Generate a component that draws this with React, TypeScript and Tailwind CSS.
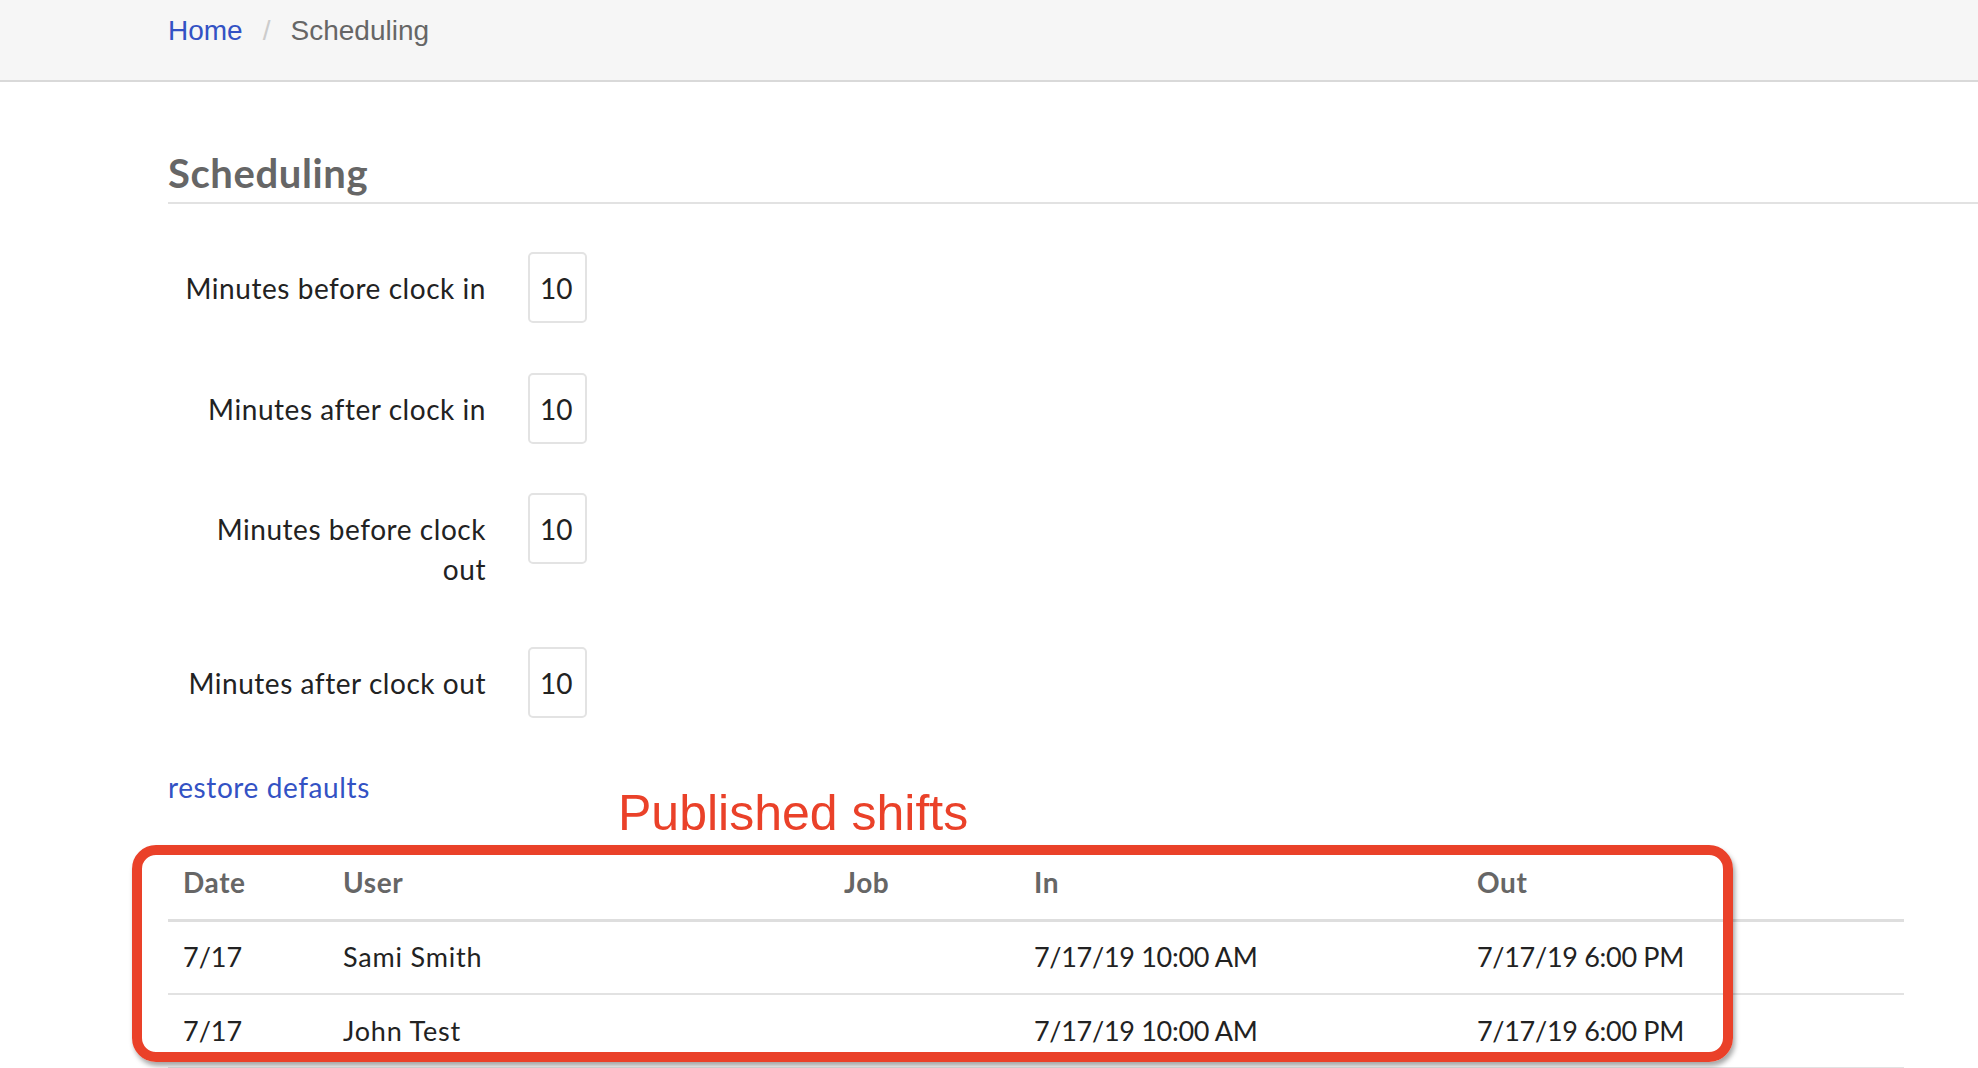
const settings = [
  { id: "before-in", label: "Minutes before clock in", value: "10", gap: "mt-[48px]" },
  { id: "after-in", label: "Minutes after clock in", value: "10", gap: "mt-[50px]" },
  { id: "before-out", label: "Minutes before clock out", value: "10", gap: "mt-[49px]", wrap: true },
  { id: "after-out", label: "Minutes after clock out", value: "10", gap: "mt-[58px]" },
];

const shifts = [
  { date: "7/17", user: "Sami Smith", job: "", in: "7/17/19 10:00 AM", out: "7/17/19 6:00 PM" },
  { date: "7/17", user: "John Test", job: "", in: "7/17/19 10:00 AM", out: "7/17/19 6:00 PM" },
];

function SettingRow({ label, value, gap, wrap }: { label: string; value: string; gap: string; wrap?: boolean }) {
  return (
    <div className={`flex items-start ${gap}`}>
      <label className="w-[318px] pt-[16px] text-right text-[28px] leading-[40px] text-[#222] tracking-[0.55px]">
        {wrap ? (
          <>
            Minutes before clock
            <br />
            out
          </>
        ) : (
          label
        )}
      </label>
      <input
        type="text"
        defaultValue={value}
        className="ml-[42px] h-[71px] w-[59px] rounded-[5px] border-2 border-[#e3e3e3] bg-white px-[10px] text-[28px] text-[#222] outline-none"
      />
    </div>
  );
}

export default function App() {
  return (
    <div className="relative min-h-screen bg-white" style={{ fontFamily: "Lato, 'Noto Sans', sans-serif" }}>
      <nav className="h-[82px] border-b-2 border-[#d9d9d9] bg-[#f6f6f6] pl-[168px] pt-[15px]">
        <div className="flex items-center text-[28px] leading-[32px]" style={{ fontFamily: "'Liberation Sans', Arial, sans-serif" }}>
          <a href="#" className="text-[#3352c4]">Home</a>
          <span className="mx-[20px] text-[#cccccc]">/</span>
          <span className="text-[#666]">Scheduling</span>
        </div>
      </nav>

      <main className="pl-[168px]">
        <h1 className="mt-[68px] border-b-2 border-[#e2e2e2] pb-[5px] text-[40px] font-bold leading-[47px] tracking-[0.6px] text-[#666]">
          Scheduling
        </h1>

        <form>
          {settings.map((s) => (
            <SettingRow key={s.id} label={s.label} value={s.value} gap={s.gap} wrap={s.wrap} />
          ))}
        </form>

        <div className="mt-[53px]">
          <a href="#" className="text-[28px] leading-[32px] text-[#3352c4] tracking-[0.6px]">
            restore defaults
          </a>
        </div>

        <table className="mt-[42px] w-[1736px] table-fixed border-collapse">
          <colgroup>
            <col className="w-[160px]" />
            <col className="w-[501px]" />
            <col className="w-[190px]" />
            <col className="w-[443px]" />
            <col className="w-[442px]" />
          </colgroup>
          <thead>
            <tr className="h-[74px] border-b-[3px] border-[#dedede]">
              {["Date", "User", "Job", "In", "Out"].map((h) => (
                <th key={h} className="px-[15px] text-left text-[28px] font-bold tracking-[0.6px] text-[#666]">
                  {h}
                </th>
              ))}
            </tr>
          </thead>
          <tbody>
            {shifts.map((s, i) => (
              <tr key={i} className="h-[74px] border-b-2 border-[#e2e2e2] text-[27px] text-[#222]">
                <td className="px-[15px]">{s.date}</td>
                <td className="px-[15px] tracking-[0.8px]">{s.user}</td>
                <td className="px-[15px]">{s.job}</td>
                <td className="px-[15px] tracking-[-0.3px]">{s.in}</td>
                <td className="px-[15px] tracking-[-0.3px]">{s.out}</td>
              </tr>
            ))}
          </tbody>
        </table>
      </main>

      {/* annotation overlay */}
      <div
        className="absolute left-[618px] top-[788px] text-[50px] leading-[50px] text-[#ea4129]"
        style={{ fontFamily: "'Liberation Sans', Arial, sans-serif" }}
      >
        Published shifts
      </div>
      <div className="pointer-events-none absolute left-[132px] top-[845px] h-[217px] w-[1601px] rounded-[24px] border-[10px] border-[#ea4129] shadow-[2px_4px_5px_rgba(0,0,0,0.35)]" />
    </div>
  );
}
